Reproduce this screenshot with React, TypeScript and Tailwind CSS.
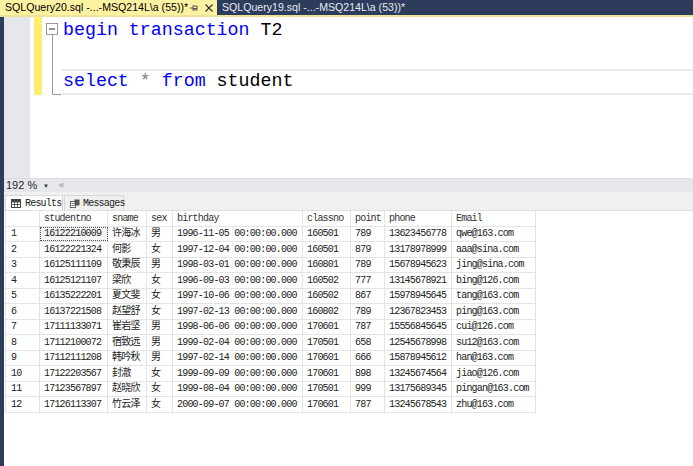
import React from "react";

const rows: string[][] = [
  ["1", "16122210009", "许海冰", "男", "1996-11-05 00:00:00.000", "160501", "789", "13623456778", "qwe@163.com"],
  ["2", "16122221324", "何影", "女", "1997-12-04 00:00:00.000", "160501", "879", "13178978999", "aaa@sina.com"],
  ["3", "16125111109", "敬秉辰", "男", "1998-03-01 00:00:00.000", "160801", "789", "15678945623", "jing@sina.com"],
  ["4", "16125121107", "梁欣", "女", "1996-09-03 00:00:00.000", "160502", "777", "13145678921", "bing@126.com"],
  ["5", "16135222201", "夏文斐", "女", "1997-10-06 00:00:00.000", "160502", "867", "15978945645", "tang@163.com"],
  ["6", "16137221508", "赵望舒", "女", "1997-02-13 00:00:00.000", "160802", "789", "12367823453", "ping@163.com"],
  ["7", "17111133071", "崔岩坚", "男", "1998-06-06 00:00:00.000", "170601", "787", "15556845645", "cui@126.com"],
  ["8", "17112100072", "宿致远", "男", "1999-02-04 00:00:00.000", "170501", "658", "12545678998", "su12@163.com"],
  ["9", "17112111208", "韩吟秋", "男", "1997-02-14 00:00:00.000", "170601", "666", "15878945612", "han@163.com"],
  ["10", "17122203567", "封澈", "女", "1999-09-09 00:00:00.000", "170601", "898", "13245674564", "jiao@126.com"],
  ["11", "17123567897", "赵晓欣", "女", "1999-08-04 00:00:00.000", "170501", "999", "13175689345", "pingan@163.com"],
  ["12", "17126113307", "竹云泽", "女", "2000-09-07 00:00:00.000", "170601", "787", "13245678543", "zhu@163.com"],
];

const headers = ["", "studentno", "sname", "sex", "birthday", "classno", "point", "phone", "Email"];
const widths = ["w-[34px]", "w-[68px]", "w-[39px]", "w-[26px]", "w-[130px]", "w-[48px]", "w-[34px]", "w-[67px]", "w-[84px]"];

const gridFont = {
  fontFamily: "'Liberation Mono','Noto Sans CJK SC',monospace",
};

function Row({ cells, header, idx }: { cells: string[]; header?: boolean; idx?: number }) {
  return (
    <div className="flex h-[15.5px] border-b border-[#e4e4e4]">
      {cells.map((c, i) => (
        <div
          key={i}
          className={`${widths[i]} shrink-0 h-full border-r border-[#e4e4e4] flex items-center ${i === 0 ? "pl-[5px]" : "pl-[4px]"} ${
            idx === 0 && i === 1 ? "outline outline-1 outline-dotted outline-[#555] -outline-offset-1 bg-[#f4f4f4]" : ""
          } ${header ? "text-[#333]" : "text-[#222]"} whitespace-nowrap overflow-hidden`}
        >
          {c}
        </div>
      ))}
    </div>
  );
}

export default function App() {
  return (
    <div className="w-[693px] h-[466px] overflow-hidden bg-white flex flex-col">
      {/* Tab bar */}
      <div className="h-[15px] bg-[#2c3c5a] flex items-stretch shrink-0 whitespace-nowrap" style={{ fontFamily: "'Liberation Sans','Noto Sans',sans-serif" }}>
        <div className="w-[217px] bg-[#fdf1a2] flex items-center pl-[5px] text-[10.6px] text-black leading-none">
          <span>SQLQuery20.sql -...-MSQ214L\a (55))*</span>
          <svg width="10" height="10" viewBox="0 0 10 10" className="ml-auto shrink-0">
            <path d="M1 5 H4 M4 2.5 V7.5 M4 3 H8 V7 H4 M4 5.5 H8" stroke="#555" strokeWidth="1" fill="none" />
          </svg>
          <svg width="10" height="10" viewBox="0 0 10 10" className="ml-[5px] mr-[3px] shrink-0">
            <path d="M1.5 1.5 L8.5 8.5 M8.5 1.5 L1.5 8.5" stroke="#333" strokeWidth="1.2" />
          </svg>
        </div>
        <div className="flex items-center pl-[5px] text-[10.6px] text-[#e8ecf4] leading-none">
          <span>SQLQuery19.sql -...-MSQ214L\a (53))*</span>
        </div>
      </div>
      <div className="h-[2px] bg-[#efe39a] shrink-0" />

      <div className="flex flex-1 min-h-0">
        <div className="w-[4px] bg-[#2c3c5a] shrink-0" />
        <div className="flex-1 flex flex-col min-w-0">
          {/* Editor */}
          <div className="h-[161px] flex shrink-0">
            <div className="w-[26px] bg-[#e6e7ed] shrink-0" />
            <div className="w-[4px] shrink-0" />
            <div className="w-[8px] shrink-0">
              <div className="h-[78px] bg-[#ffef6e]" />
            </div>
            <div className="w-[20px] shrink-0">
              <svg width="20" height="90" viewBox="0 0 20 90">
                <rect x="4.5" y="6.5" width="11" height="11" fill="white" stroke="#999" />
                <path d="M7 12 H13" stroke="#222" strokeWidth="1" />
                <path d="M10.5 17.5 V77.5 H19" stroke="#999" fill="none" />
              </svg>
            </div>
            <div
              className="flex-1 flex flex-col text-[18.3px]"
              style={{ fontFamily: "'Liberation Mono','DejaVu Sans Mono',monospace" }}
            >
              <div className="h-[26px] flex items-center pl-[1px] whitespace-pre pt-[1px]">
                <span className="text-[#0000ff]">begin</span>
                <span> </span>
                <span className="text-[#0000ff]">transaction</span>
                <span className="text-black"> T2</span>
              </div>
              <div className="h-[26px]" />
              <div className="h-[26px] flex items-center pl-[1px] whitespace-pre border-y-2 border-[#eaeaf2]">
                <span className="text-[#0000ff]">select</span>
                <span className="text-[#808080]"> * </span>
                <span className="text-[#0000ff]">from</span>
                <span className="text-black"> student</span>
              </div>
            </div>
          </div>

          {/* Zoom bar */}
          <div
            className="h-[14px] bg-[#e6e7ed] flex items-center shrink-0 border-t border-[#dcdce2]"
            style={{ fontFamily: "'Liberation Sans','Noto Sans',sans-serif" }}
          >
            <div className="w-[48px] h-full flex items-center pl-[2px] text-[11px] text-[#1e1e1e] leading-none">
              <span>192 %</span>
              <span className="ml-auto mr-[3px] text-[6px] text-[#333]">▼</span>
            </div>
            <span className="ml-[6px] text-[7px] text-[#b8b8c0]">◀</span>
          </div>

          {/* Results tabs */}
          <div className="h-[18px] bg-[#f0f0f0] flex items-end pl-[1px] shrink-0 whitespace-nowrap" style={gridFont}>
            <div className="h-[15px] w-[58px] shrink-0 bg-white border border-b-0 border-[#d8d8d8] flex items-center pl-[5px] text-[10px] tracking-[-0.8px] text-[#222]">
              <svg width="10" height="9" viewBox="0 0 10 9" className="mr-[4px] shrink-0">
                <rect x="0.5" y="0.5" width="9" height="8" fill="white" stroke="#444" />
                <path d="M0.5 3 H9.5 M0.5 5.5 H9.5 M3.5 0.5 V8.5 M6.5 0.5 V8.5" stroke="#444" strokeWidth="0.8" />
                <rect x="0.5" y="0.5" width="9" height="2.5" fill="#444" />
              </svg>
              Results
            </div>
            <div className="h-[15px] w-[60px] shrink-0 ml-[1px] bg-[#f0f0f0] border border-b-0 border-[#d8d8d8] flex items-center pl-[5px] text-[10px] tracking-[-0.8px] text-[#222]">
              <svg width="10" height="9" viewBox="0 0 10 9" className="mr-[3px] shrink-0">
                <rect x="0.5" y="2.5" width="5" height="6" fill="white" stroke="#666" />
                <rect x="4.5" y="0.5" width="5" height="6" fill="#555" />
                <path d="M1.5 4.5 H4.5 M1.5 6.5 H4.5" stroke="#666" strokeWidth="0.8" />
              </svg>
              Messages
            </div>
          </div>

          {/* Grid */}
          <div className="flex-1 bg-white pl-[1px] border-t border-[#e0e0e0]">
            <div className="w-fit border-l border-[#e4e4e4] text-[10px] tracking-[-0.8px]" style={gridFont}>
              <Row cells={headers} header />
              {rows.map((r, i) => (
                <Row key={i} cells={r} idx={i} />
              ))}
            </div>
          </div>
        </div>
      </div>
    </div>
  );
}
